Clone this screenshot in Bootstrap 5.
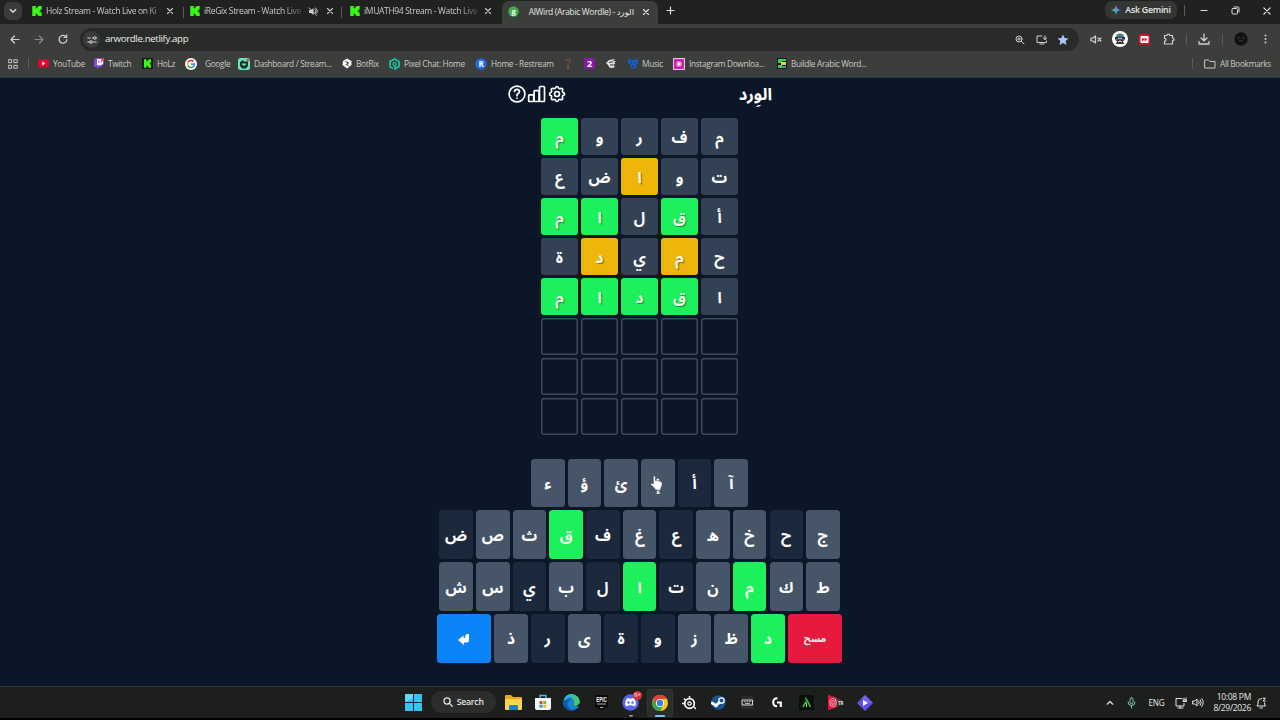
<!DOCTYPE html>
<html lang="en">
<head>
<meta charset="utf-8">
<meta name="viewport" content="width=device-width, initial-scale=1">
<title>AlWird (Arabic Wordle)</title>
<link href="https://cdn.jsdelivr.net/npm/bootstrap@5.3.0/dist/css/bootstrap.min.css" rel="stylesheet">
<style>
body{width:1280px;height:720px;overflow:hidden;background:#0b1729;color:#dcdedb;font-family:"Open Sans","DejaVu Sans",sans-serif;font-size:9px;line-height:12px}
svg{display:block;flex:none}
.ln{fill:none;stroke:currentColor;stroke-linecap:round;stroke-linejoin:round}
.slot{display:flex;align-items:center;justify-content:center;min-width:0}
.vsep{width:1px;height:11px;background:#5a5c59}
.tabstrip{height:24px;background:#1f221f}
.tabgrid{display:grid;grid-template-columns:22px 156px 2px 156px 2px 160px 156px 24px 1fr 72px 14px 26px 36px 27px;height:24px;padding-left:4px}
.drop{width:18px;height:18px;border-radius:6px;background:#393b39;margin-top:2px}
.tabitem{height:22px;padding:0 6px;color:#c9cbc8;font-size:8.5px;letter-spacing:-.33px}
.tabitem .ttl{white-space:nowrap}
.tabitem .ttl.fade-end{-webkit-mask-image:linear-gradient(90deg,#000 82%,rgba(0,0,0,.25));mask-image:linear-gradient(90deg,#000 82%,rgba(0,0,0,.25))}
.tabitem .shut{margin-right:2px}
.tabitem.on{background:#3c3e3b;height:24px;margin-top:1px;border-radius:7px 7px 0 0;color:#e3e5e2;padding-bottom:3px}
.gem{background:#343634;border-radius:7px;height:18px;margin-top:1px;font-size:8.8px;font-weight:600;color:#e6e7e5;letter-spacing:-.25px}
.toolbar{height:30px;background:#3c3e3b;display:grid;grid-template-columns:24px 24px 24px 1009px 24px 24px 24px 26px 8px 28px 8px 30px 18px;padding:0 6px 0 3px;color:#d0d2cf}
.omni{margin:4px 5px 3px;background:#282b28;border-radius:12px;padding:0 5px 0 3px;height:23px}
.omni .url{font-size:9.7px;letter-spacing:-.37px;color:#eceeeb;margin:-1px 0 0 5px}
.omni .act{width:21.5px}
.tune{width:17px;height:17px;border-radius:50%;background:#3a3c39}
.bookmarks{height:24px;background:#3c3e3b;border-bottom:1px solid #24364a;display:grid;grid-template-columns:20px 10px 56px 48px 43px 53px 104px 47px 86px 89px 20px 22px 22px 45px 104px 1fr 12px 76px;padding:0 0 4px 8px;color:#c8cac7;font-size:8.3px;letter-spacing:-.33px}
.bm{display:flex;align-items:center;gap:4px;white-space:nowrap}
.game{height:608px;padding-right:1px;font-family:"Noto Sans Arabic","Noto Sans","DejaVu Sans",sans-serif}
.head{width:265px;height:32px;color:#fff}
.head h1{font-size:16.7px;line-height:20px;padding-top:1px}
.tile{width:37px;height:37px;border-radius:3px;background:#334155;color:#fff;font-weight:700;font-size:15.5px;line-height:20px;padding-top:2px}
.board{gap:3px}
.tile.empty{background:transparent;box-shadow:inset 0 0 0 1.5px #3c4959}
.hit{background:#1cf05a!important}
.near{background:#eeb60b!important}
.hit,.near{text-shadow:1px 1px 1px rgba(0,0,0,.45);color:#f1fbe9!important}
.keys{gap:3.2px;margin-top:23.5px}
.keyrow{gap:3.2px}
.keycap{width:33.5px;height:48.7px;border:0;border-radius:3.5px;background:#475569;color:#fff;font-weight:700;font-size:15.5px;line-height:20px;padding:2px 0 0}
.keycap.hit{text-shadow:none}
.keycap.miss{background:#1c283b}
.keycap.wide{width:54.3px;font-size:9.5px}
.keycap.del{background:#e6193f}
.keycap.ent{background:#0b84f9}
.hand{position:absolute;left:9px;top:16px}
.taskbar{height:32px;background:#1c1f1c;border-top:1px solid #343633;display:grid;grid-template-columns:30px 70.5px repeat(13,29.35px) 1fr 22px 21px 29px 19px 16px 45px 20px;padding:0 9px 0 398px;color:#e4e6e3}
.find{width:65px;height:22px;border-radius:11px;background:#2a2d2a;font-weight:600;font-size:8.6px;letter-spacing:-.2px;margin-top:-1px}
.running{width:26px;height:28px;border-radius:3px;background:#2b2d2b;box-shadow:inset 0 0 0 1px #333532}
.dash{position:absolute;bottom:0;width:10px;height:1.5px;border-radius:1px;background:#6cc9ec}
.bubble{position:absolute;left:11px;top:-3px;width:9px;height:9px;border-radius:50%;background:#d6303c;color:#fff;font-size:6px;line-height:9px;text-align:center}
.lang{font-size:8.2px;letter-spacing:-.2px}
.clock{font-size:8.5px;line-height:10.5px;white-space:nowrap;letter-spacing:-.3px}
.bottomline{height:2px}
</style>
</head>
<body>
<svg width="0" height="0" class="position-absolute">
<symbol id="k" viewBox="0 0 9.500 10"><path fill="#3cf51a" d="M0 0h3.500v2.300h1.200V1.200h1.200V0h3.600v3.500H8.300v1.200H7.100v.6h1.200v1.200h1.200V10H5.900V8.800H4.700V7.700H3.500V10H0z"/></symbol>
<symbol id="x" viewBox="0 0 8 8"><path class="ln" stroke-width="1.100" d="M1.500 1.500l5 5m0-5l-5 5"/></symbol>
</svg>

<div class="tabstrip"><div class="tabgrid">
 <div class="drop slot"><svg width="8" height="6" viewBox="0 0 8 6"><path class="ln" stroke-width="1.400" d="M1.300 1.500L4 4.200 6.700 1.500"/></svg></div>
 <div class="tabitem d-flex align-items-center"><svg width="10" height="10"><use href="#k"/></svg><span class="ttl fade-end ms-1 flex-grow-1">Holz Stream - Watch Live on Ki</span><svg class="shut" width="8" height="8"><use href="#x"/></svg></div>
 <div class="slot"><i class="vsep"></i></div>
 <div class="tabitem d-flex align-items-center"><svg width="10" height="10"><use href="#k"/></svg><span class="ttl fade-end ms-1 me-auto">iReGix Stream - Watch Live</span><svg class="me-2" width="10" height="9" viewBox="0 0 10 9"><path fill="currentColor" d="M1 3h2l2.500-2v7L3 6H1z"/><path class="ln" d="M1 .8l7.500 7.500M7 2.500q1.600 1.500.4 3.500M7.500.8q3 2 1.500 5.200"/></svg><svg width="8" height="8"><use href="#x"/></svg></div>
 <div class="slot"><i class="vsep"></i></div>
 <div class="tabitem d-flex align-items-center ps-2"><svg width="10" height="10"><use href="#k"/></svg><span class="ttl fade-end ms-1 me-auto">iMUATH94 Stream - Watch Live</span><svg class="me-1" width="8" height="8"><use href="#x"/></svg></div>
 <div class="tabitem on d-flex align-items-center"><svg width="11" height="11" viewBox="0 0 11 11"><circle cx="5.500" cy="5.500" r="5.200" fill="#3fae49"/><text x="5.500" y="7.700" font-size="7.500" font-weight="700" fill="#fff" text-anchor="middle">g</text></svg><span class="ttl ms-auto me-2" dir="ltr">AlWird (Arabic Wordle) - الورد</span><svg class="shut" width="8" height="8"><use href="#x"/></svg></div>
 <div class="slot pb-1"><svg width="9" height="9" viewBox="0 0 9 9"><path class="ln" stroke-width="1.200" d="M4.500 1v7M1 4.500h7"/></svg></div>
 <div></div>
 <div class="gem slot gap-1"><svg width="10" height="10" viewBox="0 0 10 10"><path fill="#4b93ee" d="M5 0Q5.500 4.500 10 5 5.500 5.500 5 10 4.500 5.500 0 5 4.500 4.500 5 0"/><path fill="#e86b45" d="M5 0Q5.500 4.500 6 4.500H4.500Q5 3 5 0"/><path fill="#51b56c" d="M0 5l4-1 1 6q-.5-4.500-5-5"/></svg>Ask Gemini</div>
 <div class="slot pb-1"><i class="vsep"></i></div>
 <div class="slot pb-1"><svg width="8" height="3" viewBox="0 0 8 3"><path d="M.5 1.500h7" stroke="currentColor"/></svg></div>
 <div class="slot pb-1"><svg width="9" height="9" viewBox="0 0 9 9"><rect class="ln" x="1" y="2.500" width="5.500" height="5.500" rx="1"/><path class="ln" d="M3 1h4q1 0 1 1v4"/></svg></div>
 <div class="slot pb-1"><svg width="10" height="10"><use href="#x"/></svg></div>
</div></div>

<div class="toolbar">
 <div class="slot"><svg width="10" height="9" viewBox="0 0 10 9"><path class="ln" stroke-width="1.200" d="M9 4.500H1.200M4.500 1L1 4.500 4.500 8"/></svg></div>
 <div class="slot opacity-50"><svg width="10" height="9" viewBox="0 0 10 9"><path class="ln" stroke-width="1.200" d="M1 4.500h7.800M5.500 1L9 4.500 5.500 8"/></svg></div>
 <div class="slot"><svg width="10" height="10" viewBox="0 0 10 10"><path class="ln" stroke-width="1.200" d="M8.300 3.200A3.900 3.900 0 1 0 8.900 5.500M8.700.8v2.700H6"/></svg></div>
 <div class="omni d-flex align-items-center">
  <div class="tune slot"><svg width="10" height="8" viewBox="0 0 10 8"><g class="ln"><path d="M.8 2h2.700M6.500 6h2.700M.8 6h2M5.500 2h1"/><circle cx="7.800" cy="2" r="1.300"/><circle cx="4" cy="6" r="1.300"/></g></svg></div>
  <span class="url">arwordle.netlify.app</span>
  <div class="d-flex ms-auto">
   <div class="slot act"><svg width="10" height="10" viewBox="0 0 10 10"><g class="ln"><circle cx="4" cy="4" r="3"/><path d="M6.300 6.300L9 9M2.800 4h2.400M4 2.800v2.400"/></g></svg></div>
   <div class="slot act"><svg width="12" height="10" viewBox="0 0 12 10"><path class="ln" d="M6 1H1v6.500h9.500V6M4 9h4M9 .8v3.500M7.300 3L9 4.600 10.700 3"/></svg></div>
   <div class="slot act"><svg width="12" height="12" viewBox="0 0 24 24"><path fill="#a9c7fa" d="M12 1l3.300 7.200 7.700.8-5.800 5.200 1.700 7.800L12 18l-6.900 4 1.700-7.800L1 9l7.700-.8z"/></svg></div>
  </div>
 </div>
 <div class="slot"><svg width="12" height="9" viewBox="0 0 12 9"><path class="ln" stroke-width="1.200" d="M1 3h2l2.500-2v7L3 6H1zM8 3l3 3m0-3L8 6"/></svg></div>
 <div class="slot"><svg width="16" height="16" viewBox="0 0 16 16"><circle cx="8" cy="8" r="8" fill="#fff"/><path fill="#46788d" d="M4 6q0-3.500 4-3.500T12 6z"/><path fill="#31363b" d="M3 6h10v3l-2 1 1 3H4l1-3-2-1z"/><path stroke="#d24949" d="M3 8.500h3m4 0h3"/><path stroke="#e8e8e8" d="M6 11l2-1 2 1M6 7l2 1 2-1"/></svg></div>
 <div class="slot"><svg width="11" height="11" viewBox="0 0 11 11"><rect width="11" height="11" rx="1" fill="#c9152d"/><rect x="1.500" y="2" width="8" height="7" rx="1" fill="#fff"/><path fill="#c9152d" d="M3 3.500L5.500 5.500 3 7.500zM5.700 3.500L8.200 5.500 5.700 7.500z"/></svg></div>
 <div class="slot"><svg width="12" height="12" viewBox="0 0 12 12"><path class="ln" stroke-width="1.200" d="M1.500 2.500H4q0-1.500 1.300-1.500T6.600 2.500H9.500V5q1.500 0 1.500 1.300T9.500 7.600V11h-8V8.200Q3 8 3 6.700T1.500 5.200z"/></svg></div>
 <div class="slot"><i class="vsep"></i></div>
 <div class="slot"><svg width="12" height="12" viewBox="0 0 12 12"><path class="ln" stroke-width="1.300" d="M6 1v6.500M3 5l3 2.800L9 5M1 8.500V11h10V8.500"/></svg></div>
 <div class="slot"><i class="vsep"></i></div>
 <div class="slot"><svg width="14" height="14" viewBox="0 0 14 14"><circle cx="7" cy="7" r="6.700" fill="#101110"/><path class="ln" d="M3.500 6.500q1-2 2.500-.5M8 6q2-1.500 3 .5M5 9q2-1 4 0" style="stroke:#3c3c3c"/></svg></div>
 <div class="slot"><svg width="3" height="10" viewBox="0 0 3 10" fill="currentColor"><circle cx="1.500" cy="1.500" r="1"/><circle cx="1.500" cy="5" r="1"/><circle cx="1.500" cy="8.500" r="1"/></svg></div>
</div>

<div class="bookmarks">
 <div class="bm"><svg width="10" height="10" viewBox="0 0 10 10"><path class="ln" d="M.7.700h3v3h-3zM6.300.700h3v3h-3zM.7 6.300h3v3h-3zM6.300 6.300h3v3h-3z"/></svg></div>
 <div class="bm"><i class="vsep"></i></div>
 <div class="bm"><svg width="11" height="9" viewBox="0 0 11 9"><rect y=".5" width="11" height="8" rx="2" fill="#e5062f"/><path fill="#fff" d="M4.300 2.500v4l3-2z"/></svg>YouTube</div>
 <div class="bm"><svg width="10" height="11" viewBox="0 0 10 11"><path fill="#8b45e6" d="M2 0h8v6L7 9H5L3 11V9H0V2z"/><path fill="#fff" d="M3 1h6v4.500L7.500 7H6L4.500 8V7H3z"/><path stroke="#8b45e6" d="M5 2.500v2.300m2.300-2.300v2.300"/><circle cx="8.700" cy="1.500" r="1.500" fill="#e2413f"/></svg>Twitch</div>
 <div class="bm"><svg width="11" height="11" viewBox="0 0 11 11"><rect width="11" height="11" rx="1" fill="#101a0b"/><svg x="1.500" y="1" width="8" height="9"><use href="#k"/></svg></svg>HoLz</div>
 <div class="bm"><svg width="12" height="12" viewBox="0 0 12 12"><circle cx="6" cy="6" r="6" fill="#fff"/><g fill="none" stroke-width="1.700"><path stroke="#e34133" d="M8.500 3.500A3.500 3.500 0 0 0 2.900 4.400"/><path stroke="#f5bb16" d="M2.900 4.400a3.500 3.500 0 0 0 0 3.200"/><path stroke="#35a853" d="M2.900 7.600A3.500 3.500 0 0 0 8.300 8.700"/><path stroke="#4285f4" d="M8.300 8.700Q9.500 7.500 9.400 6.200H6"/></g></svg><span class="ps-1 m-0" style="margin-left:0">Google</span></div>
 <div class="bm"><svg width="12" height="12" viewBox="0 0 12 12"><rect width="12" height="12" rx="2.500" fill="#67e6bd"/><path fill="#14332e" d="M2 4l3-2 1 1.500h4V8L8 10.500H4L2 8z"/><path fill="#67e6bd" d="M4 5.500h4v1L6 8 4 6.500z"/><circle cx="10" cy="2" r="1.600" fill="#db4440"/></svg>Dashboard / Stream...</div>
 <div class="bm"><svg width="10" height="11" viewBox="0 0 10 11"><path fill="#f5f5f5" d="M1 3l4-2.500L9.500 3v4L5 10.500.5 7z"/><path stroke="#222" fill="none" d="M3.500 3.500l3 1.500-2 1.500 2 1"/></svg>BotRix</div>
 <div class="bm"><svg width="11" height="12" viewBox="0 0 11 12"><path fill="none" stroke="#20bd98" stroke-width="1.800" d="M4 10.500L1 8.700V3.500L5.500 1 10 3.500v5L6 10.800V8"/><circle cx="5.500" cy="6" r="1.600" fill="none" stroke="#20bd98" stroke-width="1.300"/></svg>Pixel Chat: Home</div>
 <div class="bm"><svg width="12" height="12" viewBox="0 0 12 12"><circle cx="6" cy="6" r="5.700" fill="#2869df"/><text x="6" y="9" text-anchor="middle" font-size="8" font-weight="700" fill="#fff">R</text></svg>Home - Restream</div>
 <div class="bm"><svg width="8" height="11" viewBox="0 0 8 11"><path class="ln" stroke-width="1.500" style="stroke:#76483a" d="M1.500 3Q2 1 4.500 1.500T6 4.500L4 6.500v1"/><circle cx="4" cy="9.500" r="1" fill="#a26a2f"/></svg></div>
 <div class="bm"><svg width="11" height="11" viewBox="0 0 11 11"><rect width="11" height="11" rx="1" fill="#8518a5"/><text x="5.500" y="8.800" text-anchor="middle" font-size="9" font-weight="700" fill="#fff">2</text></svg></div>
 <div class="bm"><svg width="11" height="11" viewBox="0 0 11 11"><path fill="#e0e0de" d="M0 5L3 2l6-1-2 2h3L8 5l2 1-3 .5L9 9q-4 2-6 0L2 7z"/><path stroke="#333" fill="none" d="M3 4.500l4-.8M4 7h3"/></svg></div>
 <div class="bm"><svg width="10" height="11" viewBox="0 0 10 11"><path fill="#1a5cb5" d="M0 0l3 2h4l3-2v5L8 7l1 2-4 2-3-2 1-2-3-2z"/><path stroke="#0d2e64" d="M3 4l1 1m3-1L6 5M4 8h2"/></svg>Music</div>
 <div class="bm"><svg width="12" height="12" viewBox="0 0 12 12"><rect x=".6" y=".6" width="10.800" height="10.800" fill="#c01aa7" stroke="#f1d5ef"/><rect x="3" y="3" width="6" height="6" rx="1.500" fill="#e65fc8"/><circle cx="6" cy="6" r="1.700" fill="#fff"/></svg>Instagram Downloa...</div>
 <div class="bm"><svg width="10" height="11" viewBox="0 0 10 11"><rect width="10" height="11" fill="#111c16"/><path fill="#44c96a" d="M1 1h8v2H5v2H1zM1 7h4v3H1z"/><path fill="#e5cd3d" d="M4 4h5v3H4z"/><path fill="#28a6a0" d="M5 8h4v2H5z"/></svg>Buildle Arabic Word...</div>
 <div class="bm"><i class="vsep"></i></div>
 <div class="bm"><svg width="12" height="10" viewBox="0 0 12 10"><path class="ln" d="M1 1h3.500L6 2.500h5V9H1z"/></svg>All Bookmarks</div>
</div>

<main class="game d-flex flex-column align-items-center">
 <header class="head d-flex justify-content-between align-items-center">
  <div class="d-flex align-items-center">
   <svg width="20" height="20" viewBox="0 0 24 24"><g class="ln" stroke-width="2"><circle cx="12" cy="12" r="9.500"/><path d="M9 9q.5-2.500 3-2.500T15 9q0 1.500-1.500 2.300T12 13.500v.5M12 17v.2"/></g></svg>
   <svg width="20" height="20" viewBox="0 0 24 24"><g class="ln" stroke-width="2"><rect x="2" y="13" width="6" height="8" rx="1"/><rect x="8.500" y="8" width="6" height="13" rx="1"/><rect x="15" y="3" width="6" height="18" rx="1"/></g></svg>
   <svg width="20" height="20" viewBox="0 0 24 24"><g class="ln" stroke-width="2"><path d="M10.325 4.317c.426-1.756 2.924-1.756 3.350 0a1.724 1.724 0 0 0 2.573 1.066c1.543-.94 3.310.826 2.370 2.370a1.724 1.724 0 0 0 1.065 2.572c1.756.426 1.756 2.924 0 3.350a1.724 1.724 0 0 0-1.066 2.573c.94 1.543-.826 3.310-2.370 2.370a1.724 1.724 0 0 0-2.572 1.065c-.426 1.756-2.924 1.756-3.350 0a1.724 1.724 0 0 0-2.573-1.066c-1.543.94-3.310-.826-2.370-2.370a1.724 1.724 0 0 0-1.065-2.572c-1.756-.426-1.756-2.924 0-3.350a1.724 1.724 0 0 0 1.066-2.573c-.94-1.543.826-3.310 2.370-2.370.996.608 2.296.070 2.572-1.065z"/><circle cx="12" cy="12" r="3"/></g></svg>
  </div>
  <h1 class="m-0 fw-bold" lang="ar" dir="rtl">الوِرد</h1>
 </header>
 <section id="board" class="board d-flex flex-column mt-2" lang="ar" dir="rtl"></section>
 <section id="keys" class="keys d-flex flex-column align-items-center" lang="ar" dir="rtl"></section>
</main>

<footer class="taskbar">
 <div class="slot"><svg width="17" height="17" viewBox="0 0 17 17" fill="#35c3f3"><path d="M0 0h8v8H0zM9 0h8v8H9zM0 9h8v8H0zM9 9h8v8H9z"/><path fill="#8ce3fa" opacity=".6" d="M0 0h8v4L0 8z"/></svg></div>
 <div class="slot"><div class="find slot gap-1"><svg width="10" height="10" viewBox="0 0 10 10"><g class="ln" stroke-width="1.300"><circle cx="4" cy="4" r="3.100"/><path d="M6.400 6.400L9.200 9.200"/></g></svg>Search</div></div>
 <div class="slot"><svg width="17" height="15" viewBox="0 0 17 15"><path fill="#e7a71d" d="M0 1q0-1 1-1h5l2 2h8q1 0 1 1v4H0z"/><path fill="#fbd44c" d="M0 4h17v10q0 1-1 1H1q-1 0-1-1z"/><path fill="#2180c8" d="M4 15v-4q0-1 1-1h7q1 0 1 1v4z"/></svg></div>
 <div class="slot"><svg width="16" height="17" viewBox="0 0 16 17"><path fill="none" stroke="#56b9e5" stroke-width="1.300" d="M5 5V1.500h6V5"/><path fill="#f4f6f7" d="M0 4h16v10q0 2-2 2H2q-2 0-2-2z"/><path fill="#e54b31" d="M4.500 7h3v3h-3z"/><path fill="#7bb928" d="M8.300 7h3v3h-3z"/><path fill="#219fdf" d="M4.500 10.700h3v3h-3z"/><path fill="#f6b51b" d="M8.300 10.700h3v3h-3z"/></svg></div>
 <div class="slot"><svg width="17" height="17" viewBox="0 0 17 17"><circle cx="8.500" cy="8.500" r="8.300" fill="#1682d4"/><path fill="#45c969" d="M3 2.300A8.300 8.300 0 0 1 16.800 9q-.6 3-4.300 3-2 0-2-1.500 1.500-2 .5-4-3-4.500-8-4.200"/><path fill="#28b8ea" d="M.5 7Q2 0 9 .2q3.500.3 5 3Q7 1 .5 7"/><path fill="#0c57a5" d="M6 7Q3 9 5 12.500t7.500 3.300Q8 18 3.500 15T.3 8Q3 4.500 8 5.800 6.500 6 6 7"/><path fill="#1c201d" d="M10.500 10.500Q10.500 13 15.500 12l2 1v-3l-1.500-.5Q15 12 12.500 12q-2 0-2-1.500"/></svg></div>
 <div class="slot"><svg width="13" height="15" viewBox="0 0 13 15"><path fill="#080908" d="M0 0h13v12l-6.500 3L0 12z"/><text x="6.500" y="7" text-anchor="middle" font-size="6.800" font-weight="700" fill="#fff" textLength="10.500" lengthAdjust="spacingAndGlyphs" font-family="Liberation Sans">EPIC</text><path stroke="#ddd" stroke-width=".8" d="M2 9h9M5 12.500h3"/></svg></div>
 <div class="slot"><div class="position-relative"><svg width="17" height="17" viewBox="0 0 17 17"><circle cx="8.500" cy="8.500" r="8.200" fill="#5965ec"/><path fill="#fff" d="M4.500 5Q6 4 7 4l.5.800h2L10 4q1 0 2.500 1 1.500 2.500 1.500 6-1.500 1.200-3 1.300l-.7-1H6.700l-.7 1Q4.500 12.200 3 11q0-3.500 1.500-6"/><circle cx="6.500" cy="8.500" r="1.200" fill="#5965ec"/><circle cx="10.500" cy="8.500" r="1.200" fill="#5965ec"/></svg><span class="bubble">9+</span><svg class="position-absolute top-100 start-50 translate-middle-x mt-1" width="4" height="2"><rect width="4" height="1.500" rx=".7" fill="#a0a39f"/></svg></div></div>
 <div class="slot"><div class="running slot position-relative"><svg width="16" height="16" viewBox="0 0 16 16"><circle cx="8" cy="8" r="8" fill="#fbc514"/><path fill="#e64134" d="M1.070 4A8 8 0 0 1 14.930 4H8L4.540 10z"/><path fill="#31a650" d="M1.070 4A8 8 0 0 0 8 16l3.460-6H4.540z"/><circle cx="8" cy="8" r="4" fill="#fff"/><circle cx="8" cy="8" r="3.200" fill="#3780ec"/></svg><span class="dash"></span></div></div>
 <div class="slot"><svg width="14" height="14" viewBox="0 0 14 14"><g fill="none" stroke="#fff"><circle cx="7.500" cy="7.500" r="4.800" stroke-width="1.700"/><circle cx="7.500" cy="7.500" r="1.700" stroke-width="1.200"/><path stroke-width="1.400" d="M7.500 0v3M0 7.500h3M2 2.500l2 2M12 11l2 2"/></g></svg></div>
 <div class="slot"><svg width="15" height="15" viewBox="0 0 15 15"><circle cx="7.500" cy="7.500" r="7.300" fill="#17558c"/><path stroke="#fff" stroke-width="2.800" stroke-linecap="round" fill="none" d="M1 8l4 2.500L10 6"/><circle cx="10.500" cy="5.500" r="2.700" fill="#17558c" stroke="#fff" stroke-width="1.300"/><circle cx="5" cy="10.500" r="1.800" fill="#fff"/></svg></div>
 <div class="slot"><svg width="13" height="13" viewBox="0 0 13 13"><rect width="13" height="13" rx="2" fill="#292c2a"/><g class="ln" style="stroke:#d7d9d6"><rect x="1.500" y="4" width="10" height="5"/><path stroke-width=".8" d="M3.500 5.700h1m1.500 0h1m1.500 0h1M4.500 7.500h4"/></g></svg></div>
 <div class="slot"><svg width="10" height="11" viewBox="0 0 10 11"><path fill="none" stroke="#fff" stroke-width="2.100" d="M5.500 1.300Q1.200 1.300 1.200 5.200T5 9.200M5 5.500h3.800V10"/></svg></div>
 <div class="slot"><svg width="15" height="15" viewBox="0 0 15 15"><rect width="15" height="15" fill="#081009"/><path fill="none" stroke="#49ae48" stroke-width="1.600" d="M4 12l3-5.500M6.500 3Q9 7 11.500 12"/><path stroke="#a9d7a5" d="M7.500 12V8"/></svg></div>
 <div class="slot"><svg width="16" height="15" viewBox="0 0 16 15"><path fill="#383b39" d="M5 1l9 4q3 2.500 0 5l-9 4z"/><path fill="#db193f" d="M0 1q0-1 1-1l8 3v9l-8 3q-1 0-1-1z"/><ellipse cx="5" cy="7.500" rx="3.300" ry="4" fill="none" stroke="#f6a9b8"/><ellipse cx="5" cy="7.500" rx="1.300" ry="2" fill="none" stroke="#f6a9b8"/><text x="10" y="9.500" font-size="4.500" font-weight="700" fill="#ddd">TR</text></svg></div>
 <div class="slot"><svg width="16" height="16" viewBox="0 0 16 16"><path fill="#5a50ea" d="M8 0l8 8-8 8-8-8z"/><path fill="#8a76f4" d="M8 0l8 8H8L4 4z" opacity=".5"/><path fill="#fff" d="M6 5v6l5-3z"/></svg></div>
 <div></div>
 <div class="slot"><svg width="8" height="6" viewBox="0 0 8 6"><path class="ln" stroke-width="1.200" d="M1.200 4.200L4 1.500l2.800 2.700"/></svg></div>
 <div class="slot"><svg width="9" height="12" viewBox="0 0 9 12"><g class="ln" style="stroke:#7fcdb0"><rect x="3" y=".8" width="3" height="6" rx="1.500"/><path d="M1 5q0 3.500 3.500 3.500T8 5M4.500 8.500V11"/></g></svg></div>
 <div class="slot lang">ENG</div>
 <div class="slot"><svg width="12" height="12" viewBox="0 0 12 12"><path class="ln" d="M7 1.500H1V9h8V6.500M3 11h5M5 9v2M9 1v2m2-2v2M8.500 3h3v1.500h-3z"/></svg></div>
 <div class="slot"><svg width="12" height="11" viewBox="0 0 12 11"><path class="ln" d="M1 4h1.800L5 2v7L2.800 7H1zM6.800 4q1 1.500 0 3M8.300 2.800q2 2.700 0 5.400M9.800 1.600q3 3.900 0 7.800"/></svg></div>
 <div class="slot justify-content-end text-end"><div class="clock">10:08 PM<br>8/29/2026</div></div>
 <div class="slot"><svg width="11" height="12" viewBox="0 0 11 12"><path class="ln" d="M5.500 1.500Q2 1.500 2 5v2L1 9h8.500l-1-2V6M4 11h2.500M7 1.200h2.500L7 4h2.500"/></svg></div>
</footer>
<div class="bg-black bottomline"></div>

<script>
// h = right place, n = wrong place, . = not in the word
const guesses=[["مفروم","....h"],["تواضع","..n.."],["أقلام",".h.hh"],["حميدة",".n.n."],["اقدام",".hhhh"],["",""],["",""],["",""]];
const mark={h:" hit",n:" near",".":""};
document.getElementById("board").innerHTML=guesses.map(([w,m])=>
 '<div class="d-flex board">'+[0,1,2,3,4].map(i=>`<div class="tile slot${w?mark[m[i]]:" empty"}">${w?w[i]:""}</div>`).join("")+'</div>').join("");
const rows=["آأإئؤء","جحخهعغفقثصض","طكمنتالبيسش","دظزوةىرذ"];
const hits="قامد",misses="أحعفتليةورض";
const hand='<svg class="hand" width="13" height="16" viewBox="0 0 13 16"><path fill="#fff" stroke="#3a4450" stroke-width=".6" d="M3.300 1.800Q4.500.3 5.500 1.800V5.500q1-.7 1.700.3 1-.7 1.800.4 1-.5 1.700.4 1.500 0 1.500 1.700 0 3-1.400 5V15H5v-1.300L.8 9.500Q.5 8 2 8l1.300 1z"/></svg>';
const cap=c=>`<button class="keycap slot position-relative${hits.includes(c)?" hit":misses.includes(c)?" miss":""}">${c}${c==="إ"?hand:""}</button>`;
const enter='<button class="keycap wide ent slot" aria-label="Enter"><svg width="12" height="12" viewBox="0 0 12 12"><path fill="#fff" d="M0 7L5.500 2.500V5H7V2.500h1.200V1H11v6.500q0 2-2.500 2H6V12z"/></svg></button>';
document.getElementById("keys").innerHTML=rows.map((r,i)=>'<div class="d-flex keyrow">'+(i===3?'<button class="keycap wide del slot">مسح</button>':"")+[...r].map(cap).join("")+(i===3?enter:"")+'</div>').join("");
</script>
<script src="https://cdn.jsdelivr.net/npm/bootstrap@5.3.0/dist/js/bootstrap.bundle.min.js"></script>
</body>
</html>
